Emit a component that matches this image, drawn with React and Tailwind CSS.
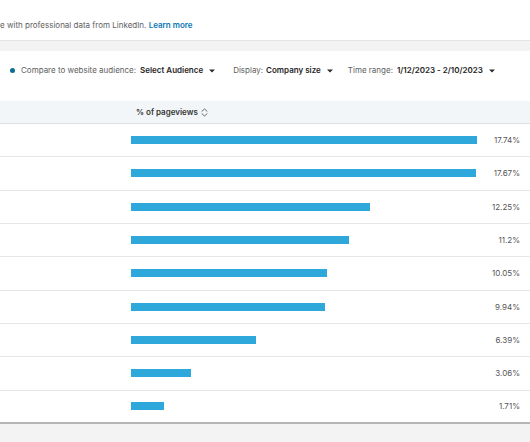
import React from 'react';

const rows = [17.74, 17.67, 12.25, 11.2, 10.05, 9.94, 6.39, 3.06, 1.71];

const Caret = () => (
  <svg width="6" height="4" viewBox="0 0 6 4" className="ml-[6px] mt-[1px]">
    <path d="M0 0.5h6L3 3.5z" fill="#2b2b2b" />
  </svg>
);

const SortIcon = () => (
  <svg width="7" height="9" viewBox="0 0 7 9" className="ml-[3px]" fill="none" stroke="#666" strokeWidth="1" strokeLinecap="round" strokeLinejoin="round">
    <path d="M1 3.2L3.5 1 6 3.2" />
    <path d="M1 5.8L3.5 8 6 5.8" />
  </svg>
);

const App = () => {
  return (
    <div className="w-[530px] h-[442px] overflow-hidden bg-[#f3f3f3] text-[8px] text-[#5e5e5e]" style={{ fontFamily: 'Inter, "Liberation Sans", sans-serif' }}>
      {/* intro card */}
      <div className="h-[40px] bg-white flex items-end pb-[9px]">
        <p className="whitespace-nowrap">
          e with professional data from LinkedIn. <span className="font-semibold text-[#0a78b5]">Learn more</span>
        </p>
      </div>

      <div className="h-[11px] border-t border-[#e3e3e3]"></div>

      {/* filters */}
      <div className="bg-white">
        <div className="h-[50px] flex items-start pt-[13px] pl-[10px]">
          <div className="flex items-center whitespace-nowrap">
            <span className="w-[5px] h-[5px] rounded-full bg-[#0b6f8f] mr-[6px]"></span>
            <span>Compare to website audience:</span>
            <span className="ml-[4px] font-semibold text-[#262626]">Select Audience</span>
            <Caret />
            <span className="ml-[18px]">Display:</span>
            <span className="ml-[3px] font-semibold text-[#262626]">Company size</span>
            <Caret />
            <span className="ml-[15px]">Time range:</span>
            <span className="ml-[4px] font-semibold text-[#262626]">1/12/2023 - 2/10/2023</span>
            <Caret />
          </div>
        </div>

        {/* table header */}
        <div className="h-[23px] bg-[#f3f6f8] border-b border-[#e0e0e0] flex items-center pl-[136px]">
          <span className="font-semibold text-[#333]">% of pageviews</span>
          <SortIcon />
        </div>

        {/* rows */}
        {rows.map((v, i) => (
          <div
            key={i}
            className={`h-[33.33px] flex items-center pl-[131px] pr-[10px] ${
              i === rows.length - 1 ? 'border-b-2 border-[#b5b5b5]' : 'border-b border-[#e6e6e6]'
            }`}
          >
            <div className="flex-1">
              <div className="h-[8px] bg-[#2ea8db]" style={{ width: `${v * 19.5}px` }}></div>
            </div>
            <span className="text-[#555]">{v}%</span>
          </div>
        ))}
      </div>
    </div>
  );
};

export default App;
